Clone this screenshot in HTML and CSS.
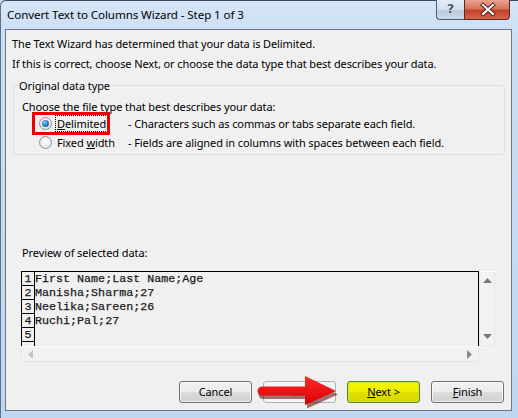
FILE: index.html
```html
<!DOCTYPE html>
<html>
<head>
<meta charset="utf-8">
<link rel="stylesheet" href="styles.css">
</head>
<body>
<div class="window">
  <div class="titlebar">
    <div class="title">Convert Text to Columns Wizard - Step 1 of 3</div>
    <div class="caption-btns">
      <div class="cbtn help">?</div>
      <div class="cbtn close">
        <svg width="46" height="20" viewBox="0 0 46 20">
          <path d="M18 5 L28 14 M28 5 L18 14" stroke="#4a1a14" stroke-width="4" stroke-linecap="square"/>
          <path d="M18 5 L28 14 M28 5 L18 14" stroke="#ffffff" stroke-width="2.2" stroke-linecap="square"/>
        </svg>
      </div>
    </div>
  </div>
  <div class="client">
    <p class="intro">The Text Wizard has determined that your data is Delimited.</p>
    <p class="intro">If this is correct, choose Next, or choose the data type that best describes your data.</p>
    <fieldset class="group">
      <legend>Original data type</legend>
      <div class="choose">Choose the file type that best describes your data:</div>
      <div class="options">
        <div class="opt marked"><span class="radio checked"></span><span class="lbl focus"><u>D</u>elimited</span></div>
        <div class="desc">- Characters such as commas or tabs separate each field.</div>
        <div class="opt"><span class="radio"></span><span class="lbl">Fixed <u>w</u>idth</span></div>
        <div class="desc">- Fields are aligned in columns with spaces between each field.</div>
      </div>
    </fieldset>
    <div class="preview-label">Preview of selected data:</div>
    <div class="preview">
      <div class="data">
        <div class="row"><span class="num">1</span><span class="txt">First Name;Last Name;Age</span></div>
        <div class="row"><span class="num">2</span><span class="txt">Manisha;Sharma;27</span></div>
        <div class="row"><span class="num">3</span><span class="txt">Neelika;Sareen;26</span></div>
        <div class="row"><span class="num">4</span><span class="txt">Ruchi;Pal;27</span></div>
        <div class="row"><span class="num">5</span><span class="txt"></span></div>
        <div class="row"><span class="num"></span><span class="txt"></span></div>
      </div>
      <div class="vscroll">
        <svg width="9" height="5" viewBox="0 0 9 5"><polygon points="4.5,0 9,5 0,5" fill="#7a7a7a"/></svg>
        <svg width="9" height="5" viewBox="0 0 9 5"><polygon points="0,0 9,0 4.5,5" fill="#7a7a7a"/></svg>
      </div>
      <div class="hscroll">
        <svg width="5" height="9" viewBox="0 0 5 9"><polygon points="0,4.5 5,0 5,9" fill="#c4c4c4"/></svg>
        <svg width="5" height="9" viewBox="0 0 5 9"><polygon points="0,0 5,4.5 0,9" fill="#8a8a8a"/></svg>
      </div>
      <div class="corner"></div>
    </div>
    <div class="buttons">
      <div class="btn">Cancel</div>
      <div class="btn disabled">&lt; Back</div>
      <div class="btn next"><u>N</u>ext &gt;</div>
      <div class="btn"><u>F</u>inish</div>
    </div>
  </div>
  <svg class="arrow" width="90" height="38" viewBox="0 0 90 38">
    <defs>
      <linearGradient id="ag" x1="0" y1="0" x2="0" y2="1">
        <stop offset="0" stop-color="#ff2a2a"/>
        <stop offset="1" stop-color="#d80000"/>
      </linearGradient>
    </defs>
    <path d="M52 6 L83 21 L52 35 L52 25.5 L8 25.5 A4.5 4.5 0 0 1 8 16.5 L52 16.5 Z" fill="#5a0000" opacity="0.55" transform="translate(0,1.5)"/>
    <path d="M50 4 L81 19 L50 33 L50 23.5 L7 23.5 A4.5 4.5 0 0 1 7 14.5 L50 14.5 Z" fill="url(#ag)"/>
  </svg>
</div>
</body>
</html>
```
FILE: styles.css
```css
*, *::before, *::after { box-sizing: border-box; }
html, body { margin: 0; padding: 0; }
body {
  width: 518px;
  height: 418px;
  overflow: hidden;
  font-family: "Noto Sans", "Open Sans", sans-serif;
  font-size: 11px;
  letter-spacing: -0.1px;
  color: #000;
  background: #c5dcf3;
}
.window {
  position: relative;
  width: 518px;
  height: 418px;
  display: flex;
  flex-direction: column;
  background: linear-gradient(#d6e6f7 0, #c9def4 40px, #bfd8f2 100%);
  border-top: 1px solid #3c4a5a;
  border-left: 1px solid #5f7185;
  border-radius: 6px 0 0 0;
}
.titlebar {
  flex: none;
  height: 28px;
  display: flex;
  justify-content: space-between;
  align-items: flex-start;
  padding-left: 6px;
}
.title {
  margin-top: 5px;
  line-height: 18px;
  font-size: 11.6px;
  color: #000;
}
.caption-btns {
  display: flex;
  margin-right: 8px;
  margin-top: -1px;
}
.cbtn {
  height: 20px;
  border: 1px solid #4d5e70;
  border-top: none;
}
.help {
  width: 28px;
  border-radius: 0 0 0 4px;
  border-right: none;
  background: linear-gradient(#e3ecf6 0, #d3e0ee 50%, #bccbdc 51%, #c9d8e8 100%);
  text-align: center;
  font-family: "DejaVu Sans", sans-serif;
  font-weight: bold;
  font-size: 13px;
  line-height: 18px;
  color: #4b5866;
  text-shadow: 0 0 1px #fff, 0 0 1px #fff;
}
.close {
  width: 46px;
  border-radius: 0 0 4px 0;
  border-color: #5a2a22;
  background: linear-gradient(#e9a493 0, #d9745f 45%, #c4412a 55%, #d5664a 100%);
}
.close svg { display: block; }
.client {
  flex: 1;
  margin: 0 6px 7px 4px;
  border: 1px solid #6a7888;
  background: #f0f0f0;
  padding-top: 4px;
  display: flex;
  flex-direction: column;
}
.intro {
  margin: 0 0 0 6px;
  line-height: 20px;
}
.group {
  margin: 3px 6px 0 7px;
  padding: 5px 7px 2px 8px;
  border: 1px solid #d5dfe5;
  border-radius: 3px;
  min-width: 0;
}
.group legend {
  margin-left: -4px;
  padding: 0 1px;
  line-height: 17px;
}
.choose {
  line-height: 15px;
}
.options {
  margin-left: 17px;
  display: grid;
  grid-template-columns: 89px auto;
  grid-auto-rows: 19px;
  align-items: center;
}
.opt {
  display: flex;
  align-items: center;
  height: 19px;
}
.opt.marked { position: relative; }
.opt.marked::after {
  content: "";
  position: absolute;
  left: -7px;
  top: -2px;
  width: 78px;
  height: 23px;
  border: 3px solid #ee0000;
}
.radio {
  width: 13px;
  height: 13px;
  border-radius: 50%;
  border: 1px solid #8f9398;
  background: radial-gradient(circle at 50% 40%, #ffffff 0, #eef0f2 45%, #d4d8dc 100%);
  flex: none;
  position: relative;
}
.radio.checked::before {
  content: "";
  position: absolute;
  left: 2px;
  top: 2px;
  width: 7px;
  height: 7px;
  border-radius: 50%;
  background: radial-gradient(circle at 40% 35%, #8ad0f5 0, #2b85c9 45%, #0f4f8a 100%);
}
.lbl {
  margin-left: 4px;
  padding: 0 1px;
  line-height: 15px;
}
.lbl.focus {
  outline: 1px dotted #000;
}
.preview-label {
  margin: 89px 0 0 16px;
  line-height: 17px;
}
.preview {
  margin: 10px 0 0 15px;
  display: grid;
  grid-template-columns: 458px 16px;
  grid-template-rows: 75px 16px;
  width: 474px;
}
.data {
  border: 1px solid #000;
  border-bottom: none;
  overflow: hidden;
  background: #f0f0f0;
  font-family: "Liberation Mono", "Courier New", monospace;
  font-size: 11.7px;
  letter-spacing: 0;
  color: #1a1a1a;
  -webkit-text-stroke: 0.25px #1a1a1a;
}
.row {
  display: flex;
  height: 14px;
  line-height: 14px;
}
.num {
  width: 13px;
  flex: none;
  border-right: 1px solid #000;
  border-bottom: 1px solid #000;
  text-align: center;
  line-height: 14px;
}
.txt {
  white-space: pre;
}
.vscroll {
  background: #f2f2f2;
  border: 1px solid #e8e8e8;
  border-top-color: #fff;
  display: flex;
  flex-direction: column;
  justify-content: space-between;
  align-items: center;
  padding: 6px 0 6px 1px;
}
.vscroll svg, .hscroll svg { display: block; }
.hscroll {
  background: #f2f2f2;
  border: 1px solid #e6e6e6;
  border-top-color: #fafafa;
  display: flex;
  justify-content: space-between;
  align-items: center;
  padding: 0 6px 0 6px;
}
.corner { background: #f0f0f0; }
.buttons {
  margin: 19px 7px 0 0;
  display: flex;
  justify-content: flex-end;
  gap: 11px;
}
.btn {
  width: 73px;
  height: 22px;
  border: 1px solid #707070;
  border-radius: 3px;
  background: linear-gradient(#f2f2f2 0, #ebebeb 50%, #dddddd 51%, #cfcfcf 100%);
  box-shadow: inset 0 0 0 1px rgba(255,255,255,0.7);
  text-align: center;
  line-height: 20px;
}
.btn.disabled {
  border-color: #adb2b5;
  background: #f4f4f4;
  color: #a0a0a0;
  box-shadow: none;
}
.btn.next {
  border-color: #5a8a1e;
  background: linear-gradient(#f7f700 0, #eeee00 50%, #e0e000 51%, #d6d600 100%);
  box-shadow: inset 0 0 0 1px #c8e04a;
}
.arrow {
  position: absolute;
  left: 254px;
  top: 371px;
}
```
